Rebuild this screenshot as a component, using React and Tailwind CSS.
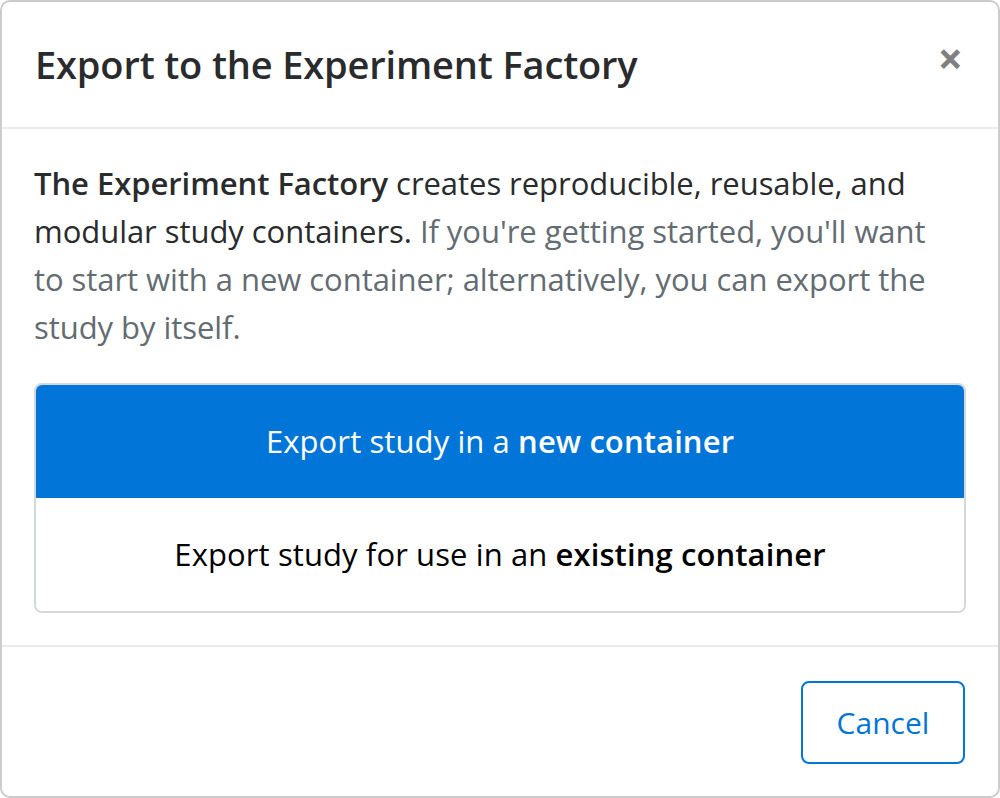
export default function App() {
  const font = { fontFamily: '"Open Sans", "Noto Sans", sans-serif' }
  return (
    <div className="w-[1000px] h-[798px] bg-white" style={font}>
      <div className="h-full flex flex-col border-2 border-[#cccccc] rounded-[10px] overflow-hidden">
        <div className="h-[127px] shrink-0 flex items-center justify-between pl-[33px] pr-[35px] border-b-2 border-[#e9ecef]">
          <h5 className="text-[38px] font-semibold text-[#292b2c] tracking-[-0.15px] leading-none -mt-[2px]">Export to the Experiment Factory</h5>
          <button className="text-[44px] font-bold text-[#808080] leading-none -mt-[14px]">×</button>
        </div>
        <div className="px-[32px] pt-[30px] pb-[32px] border-b-2 border-[#e9ecef]">
          <p className="w-[915px] text-[31px] leading-[48px] text-[#292b2c] tracking-[-0.05px] mb-[32px]">
            <strong className="font-semibold">The Experiment Factory</strong> creates reproducible, reusable, and modular study containers.{' '}
            <span className="text-[#636c72]">If you're getting started, you'll want to start with a new container; alternatively, you can export the study by itself.</span>
          </p>
          <div className="flex flex-col rounded-[8px] border-2 border-[#d5d8db] overflow-hidden">
            <button className="h-[113px] bg-[#0275d8] text-white text-[31px] tracking-[0.1px] flex items-center justify-center">
              Export study in a&nbsp;<span className="font-semibold">new container</span>
            </button>
            <button className="h-[113px] bg-white text-black text-[31px] tracking-[0.1px] flex items-center justify-center">
              Export study for use in an&nbsp;<span className="font-semibold">existing container</span>
            </button>
          </div>
        </div>
        <div className="flex-1 flex items-center justify-end pr-[33px] pt-[2px]">
          <button className="w-[164px] h-[83px] border-2 border-[#0275d8] rounded-[8px] text-[#0275d8] text-[30px]">Cancel</button>
        </div>
      </div>
    </div>
  )
}
